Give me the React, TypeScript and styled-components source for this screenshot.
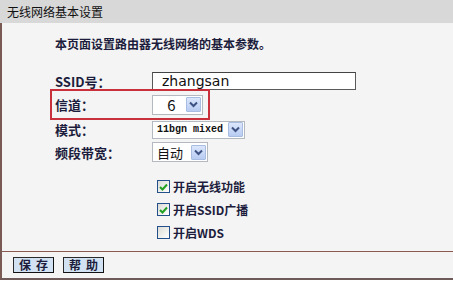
import React from 'react'
import styled, { createGlobalStyle } from 'styled-components'

const GlobalStyle = createGlobalStyle`
  html, body {
    margin: 0;
    padding: 0;
    background: #ffffff;
  }
  body {
    font-family: "Noto Sans CJK SC", "Liberation Sans", sans-serif;
  }
`

const Page = styled.div`
  width: 453px;
  height: 286px;
  background: #ffffff;
  display: flex;
  flex-direction: column;
`

const Header = styled.div`
  height: 23px;
  flex-shrink: 0;
  background: #d8d8d8;
  padding-left: 7px;
  font-size: 12px;
  line-height: 23px;
  color: #111;
`

const Frame = styled.div`
  height: 255px;
  background: #f4f4f4;
  border-left: 2px solid #7a5a55;
  border-bottom: 2px solid #6e5a58;
  display: flex;
  flex-direction: column;
`

const Body = styled.div`
  height: 228px;
  padding-left: 53px;
  display: flex;
  flex-direction: column;
`

const Intro = styled.div`
  margin-top: 13px;
  height: 16px;
  font-size: 12px;
  line-height: 16px;
  font-weight: bold;
  color: #1c1c3c;
`

const Form = styled.div`
  margin-top: 19px;
  display: flex;
  flex-direction: column;
`

const Row = styled.div<{ $h: number }>`
  box-sizing: border-box;
  height: ${p => p.$h}px;
  display: flex;
  align-items: center;
`

const HighlightRow = styled(Row)`
  margin-top: -2px;
  margin-left: -5px;
  width: 160px;
  border: 2px solid #c8303c;
  padding-left: 3px;
`

const Label = styled.div`
  width: 97px;
  flex-shrink: 0;
  font-size: 13px;
  font-weight: bold;
  color: #1c1c3c;
`

const TextInput = styled.input`
  box-sizing: border-box;
  width: 204px;
  height: 18px;
  margin: 0;
  padding: 0 0 0 9px;
  border: 1px solid #5a5a5a;
  border-top-color: #444;
  background: #ffffff;
  font-family: "DejaVu Sans", "Liberation Sans", sans-serif;
  font-size: 14px;
  color: #111;
  outline: none;
`

const Select = styled.div<{ $w: number; $h: number }>`
  box-sizing: border-box;
  width: ${p => p.$w}px;
  height: ${p => p.$h}px;
  border: 1px solid #b4b8bf;
  background: #ffffff;
  display: flex;
  align-items: center;
  padding: 0 1px 0 0;
`

const SelectValue = styled.span<{ $mono?: boolean; $center?: boolean; $big?: boolean }>`
  flex: 1;
  padding-left: 4px;
  text-align: ${p => (p.$center ? 'center' : 'left')};
  font-family: ${p =>
    p.$mono ? '"Liberation Mono", monospace' : '"Noto Sans CJK SC", "DejaVu Sans", sans-serif'};
  font-size: ${p => (p.$mono ? '10px' : p.$big ? '15px' : '13px')};
  font-weight: ${p => (p.$mono ? 'bold' : 'normal')};
  color: #111;
  line-height: 1;
`

const ArrowBox = styled.span`
  box-sizing: border-box;
  width: 15px;
  height: 15px;
  border: 1px solid #a9bde3;
  border-radius: 1px;
  background: linear-gradient(#dbe6fb, #b8ccf2);
  display: flex;
  align-items: center;
  justify-content: center;
`

const Spacer = styled.div`
  height: 10px;
`

const CheckRow = styled.div`
  height: 23px;
  padding-left: 102px;
  display: flex;
  align-items: center;
  gap: 3px;
  font-size: 12px;
  font-weight: bold;
  color: #1c1c3c;
`

const Box = styled.span`
  box-sizing: border-box;
  width: 13px;
  height: 13px;
  border: 1px solid #23508a;
  background: linear-gradient(135deg, #dcdcd6, #ffffff);
  display: flex;
  align-items: center;
  justify-content: center;
`

const Footer = styled.div`
  height: 26px;
  border-top: 1px solid #8a5a50;
  display: flex;
  align-items: center;
  gap: 9px;
  padding-left: 11px;
`

const Button = styled.button`
  box-sizing: border-box;
  width: 41px;
  height: 16px;
  margin: 0;
  padding: 0;
  border: 1px solid #2a2a2a;
  border-right-color: #111;
  border-bottom-color: #111;
  background: #d2e2f2;
  font-family: "Noto Sans CJK SC", sans-serif;
  font-size: 12px;
  font-weight: bold;
  letter-spacing: 5px;
  text-indent: 5px;
  line-height: 14px;
  color: #1c1c3c;
`

const Arrow = () => (
  <ArrowBox>
    <svg width="9" height="7" viewBox="0 0 9 7">
      <path d="M1 1.5 L4.5 5 L8 1.5" fill="none" stroke="#3d5283" strokeWidth="2" />
    </svg>
  </ArrowBox>
)

const Check = ({ checked }: { checked?: boolean }) => (
  <Box>
    {checked && (
      <svg width="9" height="8" viewBox="0 0 9 8">
        <path d="M1 4 L3.5 6.5 L8 1.5" fill="none" stroke="#22a022" strokeWidth="2" />
      </svg>
    )}
  </Box>
)

export default function App() {
  return (
    <Page>
      <GlobalStyle />
      <Header>无线网络基本设置</Header>
      <Frame>
        <Body>
          <Intro>本页面设置路由器无线网络的基本参数。</Intro>
          <Form>
            <Row $h={20}>
              <Label>SSID号：</Label>
              <TextInput readOnly value="zhangsan" />
            </Row>
            <HighlightRow $h={31}>
              <Label>信道：</Label>
              <Select $w={51} $h={20}>
                <SelectValue $center $big>6</SelectValue>
                <Arrow />
              </Select>
            </HighlightRow>
            <Row $h={19}>
              <Label>模式：</Label>
              <Select $w={93} $h={18}>
                <SelectValue $mono>11bgn mixed</SelectValue>
                <Arrow />
              </Select>
            </Row>
            <Row $h={26}>
              <Label>频段带宽：</Label>
              <Select $w={56} $h={20}>
                <SelectValue>自动</SelectValue>
                <Arrow />
              </Select>
            </Row>
            <Spacer />
            <CheckRow>
              <Check checked />
              开启无线功能
            </CheckRow>
            <CheckRow>
              <Check checked />
              开启SSID广播
            </CheckRow>
            <CheckRow>
              <Check />
              开启WDS
            </CheckRow>
          </Form>
        </Body>
        <Footer>
          <Button>保存</Button>
          <Button>帮助</Button>
        </Footer>
      </Frame>
    </Page>
  )
}
